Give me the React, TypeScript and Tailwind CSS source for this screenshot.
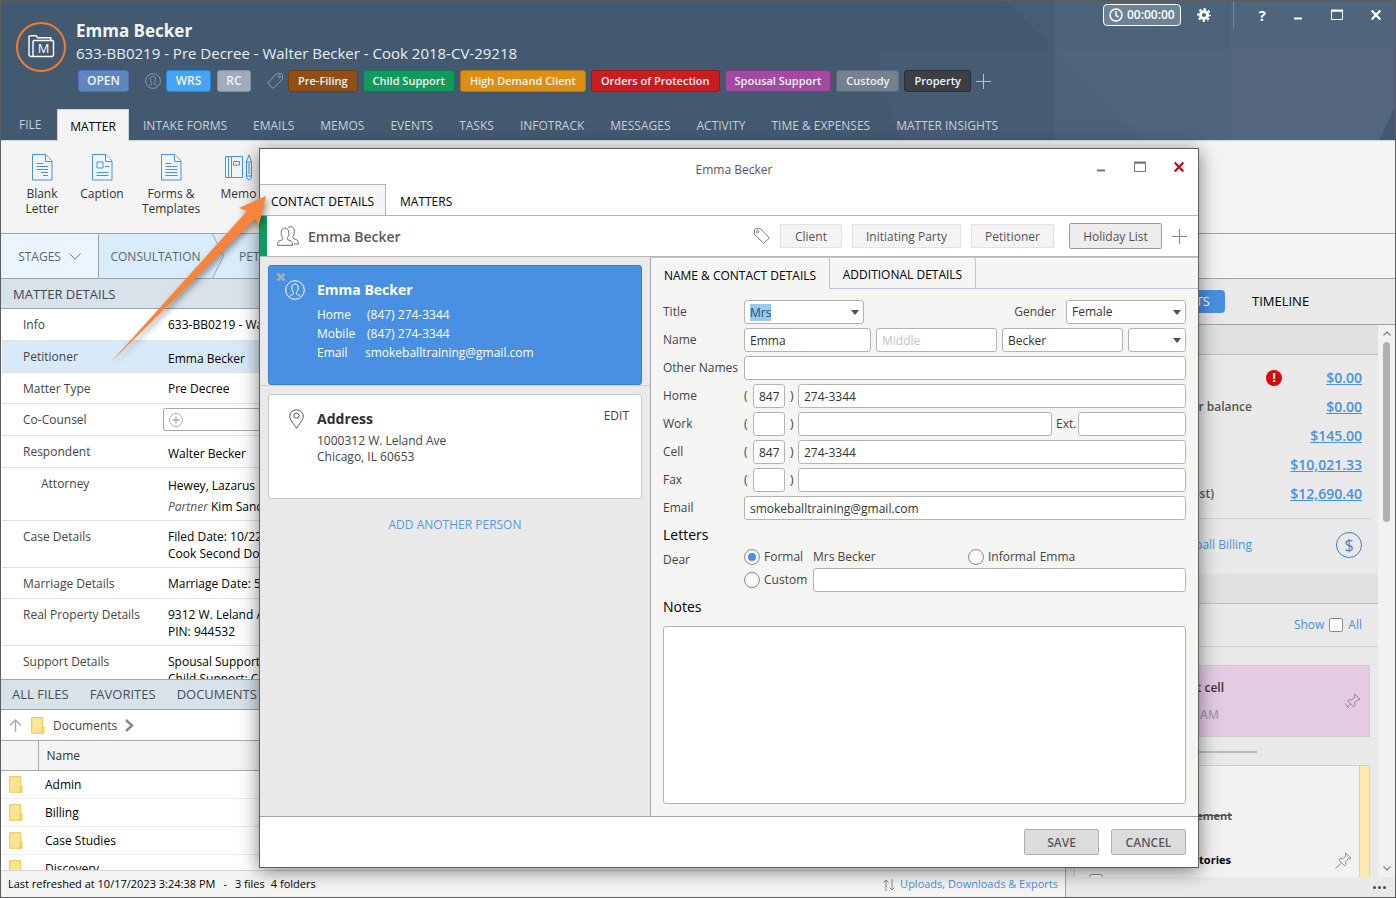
import React, { useEffect, useRef } from 'react';
import { clsx } from 'clsx';

interface TagItem {
  label: string;
  color: string;
}

interface DetailRow {
  label: string;
  height: string;
  lines: React.ReactNode[];
  active?: boolean;
  indent?: boolean;
  picker?: boolean;
  contact?: boolean;
}

const MENU = [
  'INTAKE FORMS',
  'EMAILS',
  'MEMOS',
  'EVENTS',
  'TASKS',
  'INFOTRACK',
  'MESSAGES',
  'ACTIVITY',
  'TIME & EXPENSES',
  'MATTER INSIGHTS',
];

const TAGS: TagItem[] = [
  { label: 'Pre-Filing', color: 'bg-[#8f4f17] border-[#6f3d12]' },
  { label: 'Child Support', color: 'bg-[#109b5c] border-[#0b7d49]' },
  { label: 'High Demand Client', color: 'bg-[#dc8f12] border-[#b3730c]' },
  { label: 'Orders of Protection', color: 'bg-[#cb1c1f] border-[#a01417]' },
  { label: 'Spousal Support', color: 'bg-[#a24aa2] border-[#833a84]' },
  { label: 'Custody', color: 'bg-[#76818f] border-[#5f6b79]' },
  { label: 'Property', color: 'bg-[#3c3f44] border-[#2b2d31]' },
];

const DETAILS: DetailRow[] = [
  { label: 'Info', height: 'h-8', lines: ['633-BB0219 - Walter Becker'] },
  { label: 'Petitioner', height: 'h-8', lines: ['Emma Becker'], active: true, contact: true },
  { label: 'Matter Type', height: 'h-[31px]', lines: ['Pre Decree'] },
  { label: 'Co-Counsel', height: 'h-8', lines: [], picker: true },
  { label: 'Respondent', height: 'h-8', lines: ['Walter Becker'], contact: true },
  {
    label: 'Attorney',
    height: 'h-[53px]',
    lines: ['Hewey, Lazarus', <><i className="text-[#555]">Partner</i> Kim Sanders</>],
    indent: true,
    contact: true,
  },
  { label: 'Case Details', height: 'h-[47px]', lines: ['Filed Date: 10/22/2018', 'Cook Second Domestic'] },
  { label: 'Marriage Details', height: 'h-[31px]', lines: ['Marriage Date: 5/12/2010'] },
  { label: 'Real Property Details', height: 'h-[47px]', lines: ['9312 W. Leland Ave', 'PIN: 944532'] },
  { label: 'Support Details', height: 'h-[47px]', lines: ['Spousal Support: Yes', 'Child Support: Children'] },
];

const FOLDERS = ['Admin', 'Billing', 'Case Studies', 'Discovery'];

const BALANCES = [
  { label: '', amount: '$0.00', alert: true },
  { label: 'Matter balance', amount: '$0.00' },
  { label: '', amount: '$145.00' },
  { label: '', amount: '$10,021.33' },
  { label: '', amount: '$12,690.40', cost: true },
];

const FIELD =
  'h-6 min-w-0 rounded-[3px] border border-[#b4b4b4] bg-white px-[5px] text-[12px] text-[#333] outline-none placeholder:text-[#c4c4c4]';

/* ---------- icons ---------- */

const PersonCircle = ({ className }: { className?: string }) => (
  <svg viewBox="0 0 20 20" fill="none" stroke="currentColor" className={className}>
    <circle cx="10" cy="10" r="9.3" />
    <path d="M4.6 16.2c1-1.3 2.3-1.2 3.5-1.8.6-.4.5-1.6.1-2.4-.9-1-1.4-2.3-1.4-4.3C6.800 5.200 8 3.900 10 3.900s3.200 1.300 3.200 3.800c0 2-.5 3.300-1.400 4.300-.4.800-.5 2 .1 2.400 1.200.600 2.500.500 3.500 1.800" />
  </svg>
);

const TagIcon = ({ className }: { className?: string }) => (
  <svg viewBox="0 0 16 16" fill="none" stroke="currentColor" className={className}>
    <path d="M9.500.7h5.200l.7.700v5.100L6.300 15.400.7 10z" />
    <circle cx="12.300" cy="3.700" r="1.100" />
  </svg>
);

const PlusIcon = ({ className }: { className?: string }) => (
  <svg viewBox="0 0 15 15" stroke="currentColor" className={className}>
    <path d="M7.500 0v15M0 7.500h15" />
  </svg>
);

const FolderIcon = () => (
  <svg viewBox="0 0 14 17" className="h-[17px] w-[14px]">
    <path d="M.7.7h11v15.500H.7z" fill="#ffe593" stroke="#e8c44a" />
    <path d="M11 10.500h2v5.700h-2z" fill="#ffe593" stroke="#e8c44a" />
  </svg>
);

const PinIcon = ({ long }: { long?: boolean }) => (
  <svg viewBox="0 0 17 17" fill="none" stroke="#8a8a8a" className="size-[17px]">
    <path d="M10.500 1l5.500 5.200-1.400.6-1-.2-3 3.200.3 2.800-1.300 1.300L3.700 8l1.200-1.300 2.900.2 3-3-.4-1.600z" />
    <path d={long ? 'M6.300 11L.5 16.500' : 'M6.300 11L2.500 14.600M1 10.500l4 4.800'} />
  </svg>
);

const DocIcon = ({ kind }: { kind: 'letter' | 'caption' | 'form' }) => (
  <svg viewBox="0 0 21 27" fill="none" stroke="#4a90e2" className="h-[27px] w-[21px]">
    <path d="M.5.500h13.500l6 6.500v19H.5z" fill="#eef5fd" />
    <path d="M13.500.500v7h6.500" fill="#fff" />
    {kind === 'letter' && <path d="M4.500 9.500h7M4.500 12.500h11.500M4.500 15.500h11.500M9 18.500h7M11 21.500h5" />}
    {kind === 'caption' && <path d="M5 8h6v6H5zM13 12.500h4M4.500 18.500h12M4.500 21.500h12" />}
    {kind === 'form' && <path d="M4.500 9.500h6M4.500 12.500h12M4.500 15.500h12M4.500 18.500h12M4.500 21.500h12" />}
  </svg>
);

const MemoIcon = () => (
  <svg viewBox="0 0 27 27" fill="none" stroke="#4a90e2" className="size-[27px]">
    <path d="M.5 2.500h3v21h-3zM3.500 2.500h14v21h-14zM6.500 3v21M8.500 7.500h6v3.500h-6z" />
    <path d="M21.500 8L24 .8 26.500 8v14h-5zM21.500 8h5M21.500 22c0 5 5 5 5 0M24 9v11" />
  </svg>
);

const Caret = () => (
  <svg viewBox="0 0 8 5" className="pointer-events-none absolute top-1/2 right-[5px] -mt-[2px] h-[5px] w-2 fill-[#4f4f4f]">
    <path d="M0 0h8L4 5z" />
  </svg>
);

const MinimizeIcon = () => (
  <svg viewBox="0 0 12 12" className="size-3">
    <path d="M2 9.500h8" stroke="currentColor" strokeWidth="2" />
  </svg>
);

const MaximizeIcon = () => (
  <svg viewBox="0 0 12 12" fill="none" className="size-3">
    <path d="M.5 2v8.500h11V2z" stroke="currentColor" />
    <path d="M0 1.500h12" stroke="currentColor" strokeWidth="2" />
  </svg>
);

const CloseIcon = () => (
  <svg viewBox="0 0 12 12" className="size-3">
    <path d="M1.700 1.500l8.600 9M10.300 1.500l-8.600 9" stroke="currentColor" strokeWidth="2.200" />
  </svg>
);

/* ---------- header ---------- */

const HeaderPattern = () => (
  <svg
    viewBox="879 0 516 139"
    preserveAspectRatio="xMaxYMin slice"
    className="absolute top-0 right-0 h-full w-[516px]"
  >
    <path d="M1054 0h341v49h-341z" fill="#4b6279" />
    <path d="M1006 0h48v49z" fill="#475d74" />
    <path d="M1230 0h165v49h-165z" fill="#4e657b" />
    <path d="M879 49h516v55a262 262 0 0 1-16 35H903a262 262 0 0 1-24-90z" fill="#465c74" />
    <path d="M1054 49h341v55a262 262 0 0 1-16 35h-325z" fill="#4c627a" />
    <path d="M1054 49h176v90h-87z" fill="#4f657b" />
    <path d="M1230 49h165v55a262 262 0 0 1-16 35h-149z" fill="#53667d" />
  </svg>
);

const Header = () => (
  <header className="relative flex h-[139px] shrink-0 flex-col justify-between bg-[#425970]">
    <HeaderPattern />
    <div className="relative flex">
      <svg viewBox="0 0 50 50" fill="none" stroke="#fff" className="mt-[21px] ml-[15px] size-[50px] shrink-0">
        <circle cx="25" cy="25" r="24" stroke="#f07d2b" strokeWidth="2" />
        <path d="M17 34.500h-2.500l-1.500-1.500V14.500l.8-.7h6.500l1.500 2h13v2.700M17 34.500V19.300l1-.8h18.500l1 .8v14l-1.200 1.200H17" strokeWidth="1.400" />
        <text x="27.500" y="31" textAnchor="middle" fill="#fff" stroke="none" fontSize="13">M</text>
      </svg>
      <div className="ml-[10px] pt-[18px]">
        <h1 className="text-[17px] leading-6 font-bold text-[#f1f4f7]">Emma Becker</h1>
        <p className="text-[15px] leading-5 text-[#e9eef3]">
          633-BB0219 - Pre Decree - Walter Becker - Cook 2018-CV-29218
        </p>
        <div className="mt-[7px] ml-[2px] flex items-center text-[11px] leading-5 font-semibold text-[#f0f2f5]">
          <span className="w-[51px] rounded-[3px] border border-[#4a74b4] bg-[#5f87bd] text-center text-[12px]">OPEN</span>
          <PersonCircle className="ml-4 size-4 text-[#8fa3b7]" />
          <span className="ml-[5px] w-[45px] rounded-[3px] border border-[#2484d8] bg-[#46a5f2] text-center text-[12px]">WRS</span>
          <span className="ml-[6px] w-[34px] rounded-[3px] border border-[#8390a2] bg-[#a1abb9] text-center text-[12px]">RC</span>
          <TagIcon className="mr-[5px] ml-4 size-4 text-[#8fa3b7]" />
          <div className="flex gap-[5px]">
            {TAGS.map((tag) => (
              <span key={tag.label} className={clsx('rounded-[3px] border px-[9px]', tag.color)}>
                {tag.label}
              </span>
            ))}
          </div>
          <button aria-label="Add tag" className="ml-[5px] text-[#b7c3ce]">
            <PlusIcon className="size-[15px]" />
          </button>
        </div>
      </div>
      <div className="absolute top-0 right-0 flex h-7 items-center text-white">
        <button className="mr-4 flex h-[22px] w-[78px] items-center justify-center gap-1 rounded border border-white bg-[#6d8297] text-[12px] font-semibold">
          <svg viewBox="0 0 14 14" fill="none" stroke="currentColor" strokeWidth="1.500" className="size-[14px]">
            <circle cx="7" cy="7" r="6" />
            <path d="M7 3v4.500l2.500 1.500" />
          </svg>
          00:00:00
        </button>
        <button aria-label="Settings" className="mr-[22px]">
          <svg viewBox="0 0 14 14" fill="none" stroke="currentColor" className="size-[14px]">
            <circle cx="7" cy="7" r="3.600" strokeWidth="3" />
            <circle cx="7" cy="7" r="5.900" strokeWidth="2" strokeDasharray="2.320 2.320" strokeDashoffset="1.160" />
          </svg>
        </button>
        <span className="mr-[25px] h-full border-l border-[#71879c]" />
        <button aria-label="Help" className="mr-[26px] text-[15px] font-bold">?</button>
        <button aria-label="Minimize" className="mr-[27px]"><MinimizeIcon /></button>
        <button aria-label="Maximize" className="mr-[27px]"><MaximizeIcon /></button>
        <button aria-label="Close" className="mr-[13px]"><CloseIcon /></button>
      </div>
    </div>
    <nav className="relative flex h-[31px] items-stretch text-[12px] text-[#c6d0da]">
      <button className="w-14 pt-px pl-[18px] text-left">FILE</button>
      <button className="mr-px -mb-px w-[72px] border border-b-0 border-[#cfd4d9] bg-[#f4f4f4] pt-[2px] text-center text-black">
        MATTER
      </button>
      {MENU.map((item) => (
        <button key={item} className="px-[13px] pt-[3px] whitespace-nowrap">
          {item}
        </button>
      ))}
    </nav>
  </header>
);

const RibbonButton = ({ icon, label, width }: { icon: React.ReactNode; label: React.ReactNode; width: string }) => (
  <button className={clsx('flex flex-col items-center gap-[5px] text-[12px] leading-[15px] text-[#333]', width)}>
    {icon}
    <span>{label}</span>
  </button>
);

/* ---------- matter details ---------- */

const MatterDetails = () => (
  <section className="flex min-h-0 flex-1 flex-col">
    <h2 className="h-[30px] shrink-0 border-b border-[#9ba3aa] bg-[#d8e2eb] pl-3 text-[13px] leading-[30px] text-[#41474d]">
      MATTER DETAILS
    </h2>
    <dl className="min-h-0 flex-1 overflow-hidden bg-white text-[12px] leading-[17px]">
      {DETAILS.map((row) => (
        <div
          key={row.label}
          className={clsx(
            'ml-px flex shrink-0 border-b border-[#e0e0e0] pt-[7px]',
            row.height,
            row.active && 'bg-[#d8eaf9]'
          )}
        >
          <dt className={clsx('w-[166px] shrink-0 text-[#444]', row.indent ? 'pl-[39px]' : 'pl-[21px]')}>
            {row.label}
          </dt>
          <dd className={clsx('flex flex-col text-black', row.indent && 'gap-1', row.contact && 'pt-[2px]')}>
            {row.lines.map((line, i) => (
              <span key={i}>{line}</span>
            ))}
            {row.picker && (
              <button
                aria-label="Add co-counsel"
                className="-mt-[3px] -ml-[5px] flex h-[23px] w-[300px] items-center rounded-[2px] border border-[#aaa] bg-white px-[5px]"
              >
                <svg viewBox="0 0 14 14" fill="none" stroke="#aaa" className="size-[14px]">
                  <circle cx="7" cy="7" r="6.400" />
                  <path d="M7 3.500v7M3.500 7h7" strokeWidth="1.300" />
                </svg>
              </button>
            )}
          </dd>
        </div>
      ))}
    </dl>
  </section>
);

const Files = () => (
  <section className="flex h-[191px] shrink-0 flex-col overflow-hidden bg-white">
    <div className="flex h-[31px] shrink-0 items-center gap-[21px] border-y border-[#9ba3aa] bg-[#d8e2eb] pt-px pl-[11px] text-[13px] text-[#4a4f55]">
      <button>ALL FILES</button>
      <button>FAVORITES</button>
      <button>DOCUMENTS</button>
    </div>
    <div className="flex h-[31px] shrink-0 items-center border-b border-[#aaa] pt-px pl-2 text-[12px] text-[#444]">
      <svg viewBox="0 0 13 13" fill="none" stroke="#aaa" strokeWidth="1.400" className="mr-[9px] size-[13px]">
        <path d="M6.500 13V1M1 6.500l5.500-5.500 5.500 5.500" />
      </svg>
      <FolderIcon />
      <span className="mr-2 ml-2">Documents</span>
      <svg viewBox="0 0 9 13" fill="none" stroke="#888" strokeWidth="2.400" className="h-[13px] w-[9px]">
        <path d="M1 1l6 5.500L1 12" />
      </svg>
    </div>
    <table className="w-full table-fixed border-collapse text-left text-[12px]">
      <thead>
        <tr className="h-[29px] border-b border-[#aaa] bg-[#f4f4f4] text-[#333]">
          <th className="w-[37px] border-r border-[#aaa]" />
          <th className="pt-px pl-2 font-normal">Name</th>
        </tr>
      </thead>
      <tbody>
        {FOLDERS.map((name) => (
          <tr key={name} className="h-7 border-b border-[#ececec]">
            <td className="pl-2"><FolderIcon /></td>
            <td className="pt-[2px] pl-[7px] text-black">{name}</td>
          </tr>
        ))}
      </tbody>
    </table>
  </section>
);

/* ---------- right panel ---------- */

const SidePanel = () => (
  <aside className="flex w-[329px] shrink-0 flex-col bg-[#e9e9e9]">
    <div className="flex h-[46px] shrink-0 items-center border-b border-[#a3a3a3]">
      <div className="flex w-[159px] justify-end">
        <button className="h-[23px] rounded bg-[#4a90e2] px-[15px] text-[13px] text-white">EVENTS</button>
      </div>
      <button className="ml-[27px] text-[13px] text-black">TIMELINE</button>
    </div>
    <div className="flex min-h-0 flex-1">
      <div className="min-w-0 flex-1 overflow-hidden">
        <div className="h-[30px] border-b border-[#bfbfbf] bg-[#e0e0e0]" />
        <div className="mr-2 border-b border-[#cfcfcf] pt-2 pb-[10px]">
          {BALANCES.map((row) => (
            <div key={row.amount + row.label} className="flex h-[29px] items-center pr-2">
              <span
                className={clsx(
                  'text-right text-[12px] font-semibold text-[#555]',
                  row.cost ? 'w-[148px]' : 'w-[186px]'
                )}
              >
                {row.cost ? 'WIP (at cost)' : row.label}
              </span>
              {row.alert && (
                <span className="ml-[14px] flex size-4 items-center justify-center rounded-full bg-[#d90808] text-[13px] font-bold text-white">
                  !
                </span>
              )}
              <a href="#" className="ml-auto text-[14px] font-semibold text-[#4a90e2] underline">
                {row.amount}
              </a>
            </div>
          ))}
        </div>
        <div className="flex h-[55px] items-center pr-4 pb-1">
          <a href="#" className="w-[186px] text-right text-[12px] text-[#4a8fdf]">Smokeball Billing</a>
          <button
            aria-label="Billing"
            className="ml-auto flex size-[26px] items-center justify-center rounded-full border border-[#3f7fcb] text-[16px] text-[#3f7fcb]"
          >
            $
          </button>
        </div>
        <div className="h-[30px] border-b border-[#bfbfbf] bg-[#e0e0e0]" />
        <label className="flex h-[43px] items-center justify-end gap-[5px] border-b border-[#d2d2d2] pr-4 text-[12px] text-[#4a90e2]">
          Show
          <input type="checkbox" className="size-[14px] appearance-none rounded-[2px] border border-[#8c8c8c] bg-white" />
          All
        </label>
        <div className="mt-[18px] mr-2 ml-2 flex h-[72px] items-center border border-[#d0cbd0] bg-[#e4cbe4] pr-2">
          <div className="text-[12px] leading-[27px] font-semibold">
            <p className="w-[149px] text-right text-[#333]">Call client cell</p>
            <p className="w-[144px] text-right text-[#a79aa8]">9:00 AM</p>
          </div>
          <button aria-label="Pin" className="ml-auto"><PinIcon /></button>
        </div>
        <div className="mt-[14px] ml-2 h-[2px] w-[183px] bg-[#bcbcbc]" />
        <div className="mt-[12px] mr-2 ml-2 flex h-[140px] border border-[#d0d0d0] bg-[#f2f2f2]">
          <div className="flex-1 pt-[36px] text-[11px] leading-[28px] font-bold">
            <p className="w-[157px] text-right text-[#555] line-through">Draft agreement</p>
            <div className="mt-4 flex items-center pr-[7px]">
              <p className="w-[156px] text-right text-black">Interrogatories</p>
              <button aria-label="Pin task" className="ml-auto"><PinIcon long /></button>
            </div>
            <input
              type="checkbox"
              aria-label="Task done"
              className="ml-[14px] block size-[14px] appearance-none rounded-[3px] border border-[#8c8c8c] bg-white"
            />
          </div>
          <div className="w-[10px] border-l border-[#d0d0d0] bg-[#ffe8ae]" />
        </div>
      </div>
      <div className="flex w-[17px] shrink-0 flex-col items-center bg-[#f1f1f1] py-[6px]">
        <svg viewBox="0 0 8 5" fill="none" stroke="#888" strokeWidth="1.300" className="h-[5px] w-2">
          <path d="M.5 4.500L4 1l3.500 3.500" />
        </svg>
        <div className="mt-[6px] h-[180px] w-[7px] rounded-full bg-[#b0b0b0]" />
        <svg viewBox="0 0 8 5" fill="none" stroke="#888" strokeWidth="1.300" className="mt-auto h-[5px] w-2">
          <path d="M.5.500L4 4 7.500.500" />
        </svg>
      </div>
    </div>
    <div className="flex h-5 shrink-0 items-center justify-end pr-[9px]">
      <button aria-label="More">
        <svg viewBox="0 0 13 3" className="h-[3px] w-[13px] fill-[#4a4a4a]">
          <circle cx="1.500" cy="1.500" r="1.500" />
          <circle cx="6.500" cy="1.500" r="1.500" />
          <circle cx="11.500" cy="1.500" r="1.500" />
        </svg>
      </button>
    </div>
  </aside>
);

/* ---------- contact dialog ---------- */

const Row = ({ label, id, children }: { label: string; id: string; children: React.ReactNode }) => (
  <div className="mb-1 flex h-6 items-center">
    <label htmlFor={id} className="w-[81px] shrink-0 whitespace-nowrap">{label}</label>
    {children}
  </div>
);

const PhoneInputs = ({ id, area, number }: { id: string; area?: string; number?: string }) => (
  <>
    <span className="w-[9px]">(</span>
    <input aria-label={`${id} area code`} defaultValue={area} className={clsx(FIELD, 'w-8')} />
    <span className="w-[13px] pl-[5px]">)</span>
    <input id={id} defaultValue={number} className={clsx(FIELD, 'flex-1')} />
  </>
);

const Radio = ({ label, checked }: { label: string; checked?: boolean }) => (
  <label className="flex items-center gap-1">
    <input
      type="radio"
      name="dear"
      defaultChecked={checked}
      className="size-4 appearance-none rounded-full border border-[#8f8f8f] bg-white bg-clip-content p-[3px] checked:bg-[#4a90e2]"
    />
    {label}
  </label>
);

const ContactForm = () => {
  const titleRef = useRef<HTMLInputElement>(null);

  useEffect(() => {
    titleRef.current?.select();
  }, []);

  return (
    <form className="flex min-h-0 flex-1 flex-col px-3 pt-[11px] pb-3 text-[12px] text-[#444]">
      <Row label="Title" id="title">
        <div className="relative w-[120px]">
          <input
            ref={titleRef}
            id="title"
            role="combobox"
            aria-expanded="false"
            defaultValue="Mrs"
            className={clsx(FIELD, 'w-full selection:bg-[#99c9ef] selection:text-[#2a4a66]')}
          />
          <Caret />
        </div>
        <label htmlFor="gender" className="mr-[10px] ml-auto">Gender</label>
        <div className="relative w-[120px]">
          <select id="gender" className={clsx(FIELD, 'w-full appearance-none')}>
            <option>Female</option>
            <option>Male</option>
          </select>
          <Caret />
        </div>
      </Row>
      <Row label="Name" id="first">
        <div className="flex min-w-0 flex-1 gap-[5px]">
          <input id="first" defaultValue="Emma" className={clsx(FIELD, 'w-[127px] shrink-0')} />
          <input aria-label="Middle name" placeholder="Middle" className={clsx(FIELD, 'flex-1')} />
          <input aria-label="Last name" defaultValue="Becker" className={clsx(FIELD, 'flex-1')} />
          <div className="relative w-[58px] shrink-0">
            <select aria-label="Suffix" className={clsx(FIELD, 'w-full appearance-none')}>
              <option></option>
              <option>Jr.</option>
            </select>
            <Caret />
          </div>
        </div>
      </Row>
      <Row label="Other Names" id="other"><input id="other" className={clsx(FIELD, 'flex-1')} /></Row>
      <Row label="Home" id="home"><PhoneInputs id="home" area="847" number="274-3344" /></Row>
      <Row label="Work" id="work">
        <PhoneInputs id="work" />
        <label htmlFor="ext" className="w-[26px] pl-1">Ext.</label>
        <input id="ext" className={clsx(FIELD, 'w-[108px]')} />
      </Row>
      <Row label="Cell" id="cell"><PhoneInputs id="cell" area="847" number="274-3344" /></Row>
      <Row label="Fax" id="fax"><PhoneInputs id="fax" /></Row>
      <Row label="Email" id="email">
        <input id="email" type="email" defaultValue="smokeballtraining@gmail.com" className={clsx(FIELD, 'flex-1')} />
      </Row>

      <h3 className="mt-px text-[14px] leading-5 text-black">Letters</h3>
      <fieldset className="flex pt-px">
        <span className="w-[81px] shrink-0 pt-[5px]">Dear</span>
        <div className="flex-1">
          <div className="flex h-[22px] items-center">
            <div className="w-[69px]"><Radio label="Formal" checked /></div>
            <span className="w-[155px]">Mrs Becker</span>
            <Radio label="Informal" />
            <span className="ml-1">Emma</span>
          </div>
          <div className="flex items-center">
            <div className="w-[69px]"><Radio label="Custom" /></div>
            <input aria-label="Custom salutation" className={clsx(FIELD, 'flex-1')} />
          </div>
        </div>
      </fieldset>

      <label htmlFor="notes" className="mt-[5px] mb-[9px] text-[14px] leading-5 text-black">Notes</label>
      <textarea
        id="notes"
        className="min-h-0 w-full flex-1 resize-none rounded-[3px] border border-[#b4b4b4] bg-white p-1 outline-none"
      />
    </form>
  );
};

const ContactDialog = () => (
  <div
    role="dialog"
    aria-label="Emma Becker"
    className="absolute top-[147px] right-[196px] bottom-[29px] left-[258px] flex flex-col border border-[#5f5f5f] bg-white shadow-[0_3px_18px_rgba(0,0,0,0.5)]"
  >
    {/* Title bar */}
    <div className="relative flex h-[35px] shrink-0 items-center justify-end text-[#777]">
      <span className="absolute inset-x-0 top-3 pl-[10px] text-center text-[12px] leading-[18px] text-[#555]">Emma Becker</span>
      <button aria-label="Minimize contact" className="relative mr-[27px]"><MinimizeIcon /></button>
      <button aria-label="Maximize contact" className="relative mr-[27px]"><MaximizeIcon /></button>
      <button aria-label="Close contact" className="relative mr-[13px] text-[#d0021b]"><CloseIcon /></button>
    </div>
    <div className="flex h-8 shrink-0 border-b border-[#b5b5b5] text-[12px] text-black">
      <button className="w-[126px] border-t border-r border-[#b5b5b5] bg-[#f5f5f5] pt-[3px] text-center">CONTACT DETAILS</button>
      <button className="px-[14px] pt-1">MATTERS</button>
    </div>

    {/* Contact name and tags */}
    <div className="flex h-[41px] shrink-0 items-center border-b border-[#b5b5b5] pr-[11px]">
      <span className="h-full w-[7px] bg-[#109b5c]" />
      <svg viewBox="0 0 22 20" fill="none" stroke="#6a6a6a" className="mr-[9px] ml-[10px] h-5 w-[22px]">
        <path d="M.6 19.300c0-3 .6-4 2.600-4.700l2.200-.9c.7-.5.700-1.500.1-2.200-1-1.200-1.300-2.300-1.300-4.800 0-3 1.300-4.600 3.800-4.600s3.800 1.600 3.800 4.600c0 2.500-.3 3.600-1.300 4.800-.6.700-.6 1.700.1 2.200l2.300.9c2 .700 2.600 1.700 2.600 4.700z" />
        <path d="M11 1.300c3.500-1.600 6.400.1 6.400 4 0 2.400-.3 3.500-1.200 4.700-.6.700-.5 2 .2 2.500l2.500 1c2 .8 2.500 1.800 2.500 4.500h-4.500" />
      </svg>
      <h2 className="text-[14px] font-semibold text-[#5a5a5a]">Emma Becker</h2>
      <TagIcon className="mr-[10px] ml-auto size-4 -scale-x-100 text-[#777]" />
      <div className="flex items-center gap-[10px] text-[12px] text-[#555]">
        <button className="h-6 w-[62px] border border-[#e3e1e4] bg-[#f4f3f6] pt-px">Client</button>
        <button className="h-6 w-[109px] border border-[#e3e1e4] bg-[#f4f3f6] pt-px">Initiating Party</button>
        <button className="h-6 w-[83px] border border-[#e3e1e4] bg-[#f4f3f6] pt-px">Petitioner</button>
        <button className="ml-[5px] h-[26px] w-[93px] rounded-[2px] border border-[#9d9d9d] bg-[#ececec] pt-px">Holiday List</button>
        <button aria-label="Add contact tag" className="text-[#8a8a8a]"><PlusIcon className="size-[15px]" /></button>
      </div>
    </div>

    <div className="flex min-h-0 flex-1">
      {/* People */}
      <div className="w-[390px] shrink-0 bg-[#e9e9e9] text-[12px]">
        <div className="border-b border-[#d2d2d2] px-2 pt-2">
          <div className="relative flex h-[120px] rounded-[3px] border border-[#3a7fd3] bg-[#4a90e2] pt-[14px] pl-4 text-white">
            <button aria-label="Remove person" className="absolute top-[6px] left-[7px] text-[#a9adb3]">
              <svg viewBox="0 0 10 10" className="size-[10px]">
                <path d="M1.500 1.500l7 7M8.500 1.500l-7 7" stroke="currentColor" strokeWidth="2.600" />
              </svg>
            </button>
            <PersonCircle className="mr-3 size-5" />
            <div>
              <h3 className="mb-[5px] text-[14px] leading-5 font-bold">Emma Becker</h3>
              <dl className="grid grid-cols-[48px_auto] leading-[19px]">
                <dt>Home</dt>
                <dd className="pl-[2px]">(847) 274-3344</dd>
                <dt>Mobile</dt>
                <dd className="pl-[2px]">(847) 274-3344</dd>
                <dt>Email</dt>
                <dd>smokeballtraining@gmail.com</dd>
              </dl>
            </div>
          </div>
        </div>
        <div className="mx-2 mt-2 flex h-[105px] rounded-[3px] border border-[#c9c9c9] bg-white pt-[14px] pr-3 pl-5 text-[#444]">
          <svg viewBox="0 0 15 20" fill="none" stroke="#555" className="mr-[13px] h-5 w-[15px]">
            <path d="M7.500 19.300C5 15 .7 11 .7 7.200a6.800 6.500 0 0 1 13.600 0C14.300 11 10 15 7.500 19.300z" />
            <circle cx="7.500" cy="6.700" r="2.600" />
          </svg>
          <div className="leading-4">
            <h3 className="mb-1 text-[14px] leading-5 font-bold text-[#2f2f2f]">Address</h3>
            <p>1000312 W. Leland Ave</p>
            <p>Chicago, IL 60653</p>
          </div>
          <button className="-mt-[2px] ml-auto self-start">EDIT</button>
        </div>
        <button className="mx-auto mt-[17px] block text-[12px] text-[#5a9ae0]">ADD ANOTHER PERSON</button>
      </div>

      <div className="flex min-w-0 flex-1 flex-col border-l border-[#a8a8a8] bg-[#f5f5f4]">
        <div className="flex h-8 shrink-0 border-t border-[#b5c7dc] text-[12px] text-black">
          <button className="w-[178px] pt-1 text-center">NAME &amp; CONTACT DETAILS</button>
          <button className="w-[147px] border border-t-0 border-[#b5c7dc] pt-[3px]">ADDITIONAL DETAILS</button>
          <span className="flex-1 border-b border-[#b5c7dc]" />
        </div>
        <ContactForm />
      </div>
    </div>

    <div className="flex h-[51px] shrink-0 items-center justify-end gap-3 border-t border-[#a0a0a0] pr-3 text-[12px] font-semibold text-[#5a5a5a]">
      <button className="h-[26px] w-[75px] rounded-[2px] border border-[#b0b0b0] bg-[#dcdcdc] pt-px">SAVE</button>
      <button className="h-[26px] w-[75px] rounded-[2px] border border-[#b0b0b0] bg-[#dcdcdc] pt-px">CANCEL</button>
    </div>
  </div>
);

const Pointer = () => (
  <svg viewBox="0 0 180 190" className="pointer-events-none absolute top-[184px] left-[99px] h-[190px] w-[180px] drop-shadow-[2px_3px_3px_rgba(0,0,0,0.4)]">
    <path d="M10.500 177.500L147 26l-8-3L166 11l-7 29-4-6z" fill="#f9833a" />
  </svg>
);

const App: React.FC = () => (
  <div className="relative flex h-screen flex-col overflow-hidden border border-[#5c5c5c] bg-[#f4f4f4] font-['Open_Sans','Noto_Sans',sans-serif]">
    <Header />

    {/* Ribbon */}
    <div className="flex h-[94px] shrink-0 items-start border-t border-b border-t-[#d4d4d4] border-b-[#a3a3a3] pt-[13px] pl-[11px]">
      <RibbonButton width="w-[60px]" icon={<DocIcon kind="letter" />} label={<>Blank<br />Letter</>} />
      <RibbonButton width="w-[60px]" icon={<DocIcon kind="caption" />} label="Caption" />
      <RibbonButton width="w-[78px]" icon={<DocIcon kind="form" />} label={<>Forms &amp;<br />Templates</>} />
      <RibbonButton width="w-[57px]" icon={<MemoIcon />} label="Memo" />
    </div>

    {/* Stages */}
    <div className="flex h-[45px] shrink-0 border-b border-[#a3a3a3] text-[12px] text-[#5d656d]">
      <button className="flex w-[98px] items-center justify-center gap-2 border-r border-[#a3a3a3] bg-[#ebf5ff] pt-px">
        STAGES
        <svg viewBox="0 0 12 7" fill="none" stroke="#777" className="h-[7px] w-3">
          <path d="M.5.500L6 6.300 11.500.500" />
        </svg>
      </button>
      <div className="flex items-stretch bg-[#d8ecfc]">
        <button className="w-[113px] pt-px text-center">CONSULTATION</button>
        <svg viewBox="0 0 12 44" preserveAspectRatio="none" fill="none" stroke="#9aa7b3" className="h-full w-3">
          <path d="M.5 0L11.500 22 .5 44" />
        </svg>
        <button className="px-[15px] pt-px">PETITION FILED</button>
      </div>
    </div>

    <main className="flex min-h-0 flex-1">
      <div className="flex min-w-0 flex-1 flex-col border-r border-[#a3a3a3]">
        <MatterDetails />
        <Files />
        <footer className="flex h-[27px] shrink-0 items-center border-t border-[#d6d6d6] bg-[#f5f5f4] px-[7px] pt-px text-[11px] text-black">
          <span>Last refreshed at 10/17/2023 3:24:38 PM</span>
          <span className="mx-2">-</span>
          <span>3 files</span>
          <span className="ml-[6px]">4 folders</span>
          <svg viewBox="0 0 12 12" fill="none" stroke="#888" className="mr-[5px] ml-auto size-3">
            <path d="M3 12V1M.5 3.500L3 1l2.500 2.500M9 0v11M6.500 8.500L9 11l2.500-2.500" />
          </svg>
          <a href="#" className="text-[#4a90e2]">Uploads, Downloads &amp; Exports</a>
        </footer>
      </div>
      <SidePanel />
    </main>

    <ContactDialog />
    <Pointer />
  </div>
);

export default App;
